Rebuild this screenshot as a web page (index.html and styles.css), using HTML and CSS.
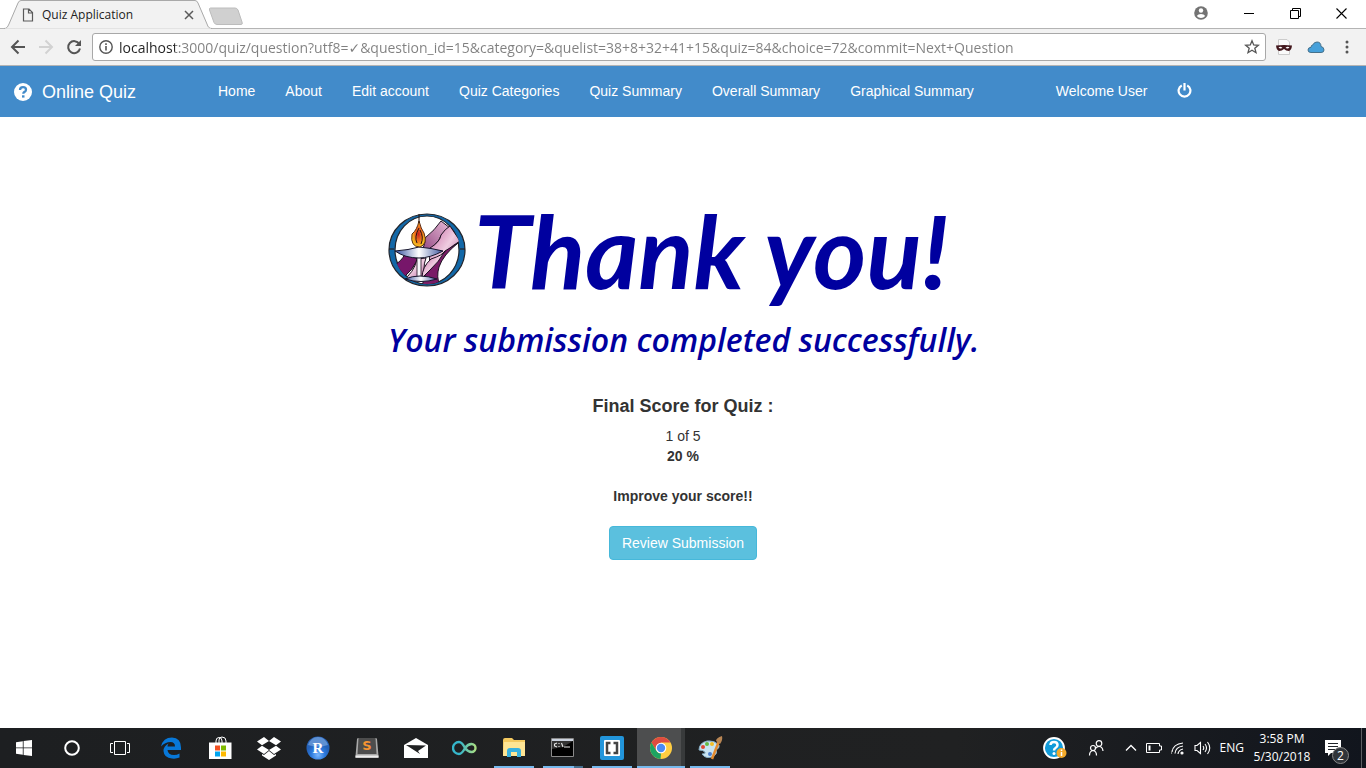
FILE: index.html
```html
<!DOCTYPE html>
<html lang="en">
<head>
<meta charset="utf-8">
<title>Quiz Application</title>
<link rel="stylesheet" href="styles.css">
</head>
<body>
<header class="browser">
  <div class="tabstrip">
    <div class="tab">
      <svg class="tab-shape" viewBox="0 0 208 29" preserveAspectRatio="none"><path d="M0 28.500C3 28.500 3.500 27 5 24L14 3Q15 .5 17 .5H191Q193 .5 194 3L203 24C204 27 205 28.500 208 28.500" fill="#f2f2f2" stroke="#a9a9a9"/><path d="M1 29H207" stroke="#f2f2f2"/></svg>
      <svg class="tab-icon" width="12" height="14" viewBox="0 0 12 14" fill="none" stroke="#5a5a5a" stroke-width="1.200"><path d="M1.500 1H7L10.500 4.500V13H1.500ZM6.500 1V5H10.500"/></svg>
      <span class="tab-title">Quiz Application</span>
      <button class="plain tab-close" aria-label="Close tab"><svg width="10" height="10" viewBox="0 0 10 10" stroke="#5a5a5a" stroke-width="1.500"><path d="M1 1L9 9M9 1L1 9"/></svg></button>
    </div>
    <button class="plain newtab" aria-label="New tab"><svg width="36" height="19" viewBox="0 0 36 19"><path d="M2.500 1H27Q29 1 30 3L34 15Q35 17.500 33 17.500H9Q7 17.500 6 15.500L1.500 3Q1 1 2.500 1Z" fill="#d0d0d0" stroke="#bcbcbc"/></svg></button>
    <div class="window-controls">
      <button class="plain account" aria-label="Account"><svg width="14" height="14" viewBox="0 0 14 14"><circle cx="7" cy="7" r="6.800" fill="#737373"/><circle cx="7" cy="4.500" r="2.200" fill="#fff"/><path d="M2.800 10Q4 8 7 8T11.200 10Q9.500 12 7 12T2.800 10Z" fill="#fff"/></svg></button>
      <button class="plain" aria-label="Minimize"><svg width="11" height="11" viewBox="0 0 11 11"><path d="M0 5.500H10" stroke="#000"/></svg></button>
      <button class="plain" aria-label="Restore"><svg width="11" height="11" viewBox="0 0 11 11" fill="none" stroke="#000"><path d="M.5 2.500H8.500V10.500H.5ZM2.500 2.500V.5H10.500V8.500H8.500"/></svg></button>
      <button class="plain" aria-label="Close"><svg width="11" height="11" viewBox="0 0 11 11" stroke="#000" stroke-width="1.100"><path d="M.5 .5L10.500 10.500M10.500 .5L.5 10.500"/></svg></button>
    </div>
  </div>
  <div class="toolbar">
    <button class="plain tool" aria-label="Back"><svg width="16" height="16" viewBox="0 0 16 16" fill="none" stroke="#555" stroke-width="2"><path d="M15 8H2.500M8.500 1.500L2 8L8.500 14.500"/></svg></button>
    <button class="plain tool" aria-label="Forward"><svg width="16" height="16" viewBox="0 0 16 16" fill="none" stroke="#d2d2d2" stroke-width="2"><path d="M1 8H13.500M7.500 1.500L14 8L7.500 14.500"/></svg></button>
    <button class="plain tool" aria-label="Reload"><svg width="16" height="16" viewBox="0 0 16 16"><path d="M13.300 5A6 6 0 1 0 14 9.500" fill="none" stroke="#555" stroke-width="2"/><path d="M15 1V7H9Z" fill="#555"/></svg></button>
    <div class="omnibox">
      <svg width="14" height="14" viewBox="0 0 14 14"><circle cx="7" cy="7" r="6.200" fill="none" stroke="#555" stroke-width="1.400"/><path d="M6.200 6H7.800V10.500H6.200ZM6.200 3.300H7.800V4.900H6.200Z" fill="#555"/></svg>
      <input class="url" type="text" aria-label="Address" value="localhost:3000/quiz/question?utf8=✓&amp;question_id=15&amp;category=&amp;quelist=38+8+32+41+15&amp;quiz=84&amp;choice=72&amp;commit=Next+Question">
      <button class="plain" aria-label="Bookmark"><svg width="16" height="16" viewBox="0 0 16 16"><path d="M8 1.800L9.700 6L14.300 6.300L10.800 9.200L12 13.700L8 11.200L4 13.700L5.200 9.200L1.700 6.300L6.300 6Z" fill="none" stroke="#555" stroke-width="1.300"/></svg></button>
    </div>
    <div class="extensions">
      <button class="plain" aria-label="Mask extension"><svg width="16" height="16" viewBox="0 0 16 16"><path d="M2.500 .5H11L13.500 3V15.500H2.500Z" fill="#fafafa" stroke="#ccc"/><path d="M0 6.500Q8 5.500 16 6.500Q15.500 11 13 12Q10 12 8 10Q6 12 3 12Q.5 11 0 6.500Z" fill="#42161c"/><path d="M2.500 8.500Q4.500 7 6.500 9Q4 10 2.500 8.500ZM9.500 9Q11.500 7 13.500 8.500Q12 10 9.500 9Z" fill="#fff"/></svg></button>
      <button class="plain" aria-label="Cloud extension"><svg width="18" height="14" viewBox="0 0 18 14"><path d="M4 12.500Q1 12.500 1 10Q1 7.500 4 7.300Q4 5 6 4.800Q7 2 10 2Q14 2 14 6.500Q17 7 17 10Q17 12.500 14 12.500Z" fill="#46a0da" stroke="#46718b"/></svg></button>
      <button class="plain" aria-label="Menu"><svg width="4" height="14" viewBox="0 0 4 14" fill="#555"><circle cx="2" cy="2" r="1.500"/><circle cx="2" cy="7" r="1.500"/><circle cx="2" cy="12" r="1.500"/></svg></button>
    </div>
  </div>
</header>

<nav class="navbar">
  <a class="brand" href="#"><svg width="18" height="18" viewBox="0 0 18 18"><circle cx="9" cy="9" r="9" fill="#fff"/><path d="M6 7Q6 4.200 9 4.200Q12 4.200 12 6.700Q12 8 10.500 8.900Q9.300 9.500 9.300 10.800" fill="none" stroke="#428bca" stroke-width="2.300"/><path d="M8 12.300H10.500V14.600H8Z" fill="#428bca"/></svg>Online Quiz</a>
  <ul class="nav-links">
    <li><a href="#">Home</a></li><li><a href="#">About</a></li><li><a href="#">Edit account</a></li><li><a href="#">Quiz Categories</a></li><li><a href="#">Quiz Summary</a></li><li><a href="#">Overall Summary</a></li><li><a href="#">Graphical Summary</a></li>
  </ul>
  <ul class="nav-links user-links">
    <li><a href="#">Welcome User</a></li>
    <li><a href="#" aria-label="Log out"><svg width="15" height="17" viewBox="0 0 15 17" fill="none" stroke="#fff" stroke-width="2.200"><path d="M4.800 2.400A5.900 5.900 0 1 0 10.200 2.400M7.500 0V7.500"/></svg></a></li>
  </ul>
</nav>

<main class="result">
  <section class="thanks">
    <div class="thanks-row">
      <svg class="chalice" viewBox="0 0 78 74">
        <defs>
          <linearGradient id="pink" x1="0" y1="1" x2="1" y2="0"><stop offset="0" stop-color="#7d2c6d"/><stop offset="1" stop-color="#e9bcd8"/></linearGradient>
          <linearGradient id="pink2" x1="0" y1="0" x2="1" y2="1"><stop offset="0" stop-color="#c563a0"/><stop offset=".5" stop-color="#efcce0"/><stop offset="1" stop-color="#a95290"/></linearGradient>
          <linearGradient id="bowl"><stop offset="0" stop-color="#3551a0"/><stop offset=".5" stop-color="#fff"/><stop offset="1" stop-color="#4058a0"/></linearGradient>
          <radialGradient id="flame"><stop offset="0" stop-color="#c8201e"/><stop offset=".5" stop-color="#ef6b1f"/><stop offset="1" stop-color="#f7c81e"/></radialGradient>
          <clipPath id="disc"><ellipse cx="39" cy="37" rx="33" ry="34"/></clipPath>
        </defs>
        <ellipse cx="39" cy="37" rx="38" ry="36" fill="#1268a8" stroke="#22252c" stroke-width="1.200"/>
        <ellipse cx="39" cy="37" rx="32" ry="34" fill="#fff" stroke="#22252c" stroke-width="1.200"/>
        <g clip-path="url(#disc)" stroke="#1c1020" stroke-width="1">
          <path d="M28 46Q38 34 37 25Q47 17 53 8L62 15Q53 20 51 27Q44 36 28 46Z" fill="url(#pink)"/>
          <path d="M42 35Q52 29 53 22Q57 16 62 13L72 28Q58 36 48 52L41 60Z" fill="url(#pink2)"/>
          <path d="M17 41L30 46Q24 58 16 64L6 52Q13 49 17 41Z" fill="#77166a"/>
          <path d="M29 46L38 45Q34 55 38 68H14Q26 60 29 46Z" fill="url(#pink2)"/>
          <path d="M70 30Q55 42 51 54Q48 64 52 73H34Q38 62 38 52Q52 45 57 38Z" fill="#791b66"/>
          <path d="M43 46Q55 42 57 38Q51 49 42 57L34 65Q34 54 43 46Z" fill="url(#pink2)"/>
        </g>
        <path d="M29 44H33V66H29Z" fill="#f8f5fb" stroke="#1c1020" stroke-width=".8"/>
        <path d="M7 38Q21 37 31 34Q43 35 55 38Q42 45 31 45Q17 45 7 38Z" fill="url(#bowl)" stroke="#15152c"/>
        <path d="M17 66Q31 60 49 66Q33 71 17 66Z" fill="url(#bowl)" stroke="#15152c"/>
        <path d="M31 8Q33 16 36 20Q40 31 32 34Q22 34 24 21Q29 17 31 8Z" fill="url(#flame)" stroke="#5e2b13"/>
        <path d="M31 1V10M29 30Q26 24 31 15M33 31Q36 24 32 17M1 36H6M72 36H77" fill="none" stroke="#26150e"/>
      </svg>
      <h1>Thank you!</h1>
    </div>
    <p class="thanks-note">Your submission completed successfully.</p>
  </section>
  <section class="score">
    <h2>Final Score for Quiz :</h2>
    <p>1 of 5</p>
    <p><strong>20 %</strong></p>
    <p class="improve"><strong>Improve your score!!</strong></p>
    <button class="review">Review Submission</button>
  </section>
</main>

<footer class="taskbar">
  <div class="system-buttons">
    <button class="plain task" aria-label="Start"><svg width="16" height="16" viewBox="0 0 16 16" fill="#fff"><path d="M0 2.200L6.800 1.200V7.500H0ZM7.600 1L16 0V7.500H7.600ZM0 8.300H6.800V14.800L0 13.800ZM7.600 8.300H16V16L7.600 15Z"/></svg></button>
    <button class="plain task" aria-label="Cortana"><svg width="16" height="16" viewBox="0 0 16 16"><circle cx="8" cy="8" r="6.800" fill="none" stroke="#fff" stroke-width="2"/></svg></button>
    <button class="plain task" aria-label="Task view"><svg width="20" height="14" viewBox="0 0 20 14" fill="none" stroke="#fff"><path d="M4.500 .5H15.500V13.500H4.500ZM3 2.500H.5V11.500H3M17 2.500H19.500V11.500H17"/></svg></button>
  </div>
  <div class="apps">
    <button class="plain task" aria-label="Edge"><svg width="20" height="22" viewBox="0 0 20 22"><path d="M0 9.500Q2 .5 11 .5Q20 1 20 10.500V13H6.500Q7 18 13 18Q16 18 18.500 16.500V20.500Q15 22 11 21.500Q3 21 2.500 14Q2.500 9 7.500 6.500Q6.500 8 6.500 9.500H14Q14 5 9.500 5Q4 5 0 9.500Z" fill="#0878d8"/></svg></button>
    <button class="plain task" aria-label="Store"><svg width="24" height="24" viewBox="0 0 24 24"><path d="M8 7V5Q8 1.500 11 1.500T14 5V7M11 7V4Q11 1 14 1Q18 1 18 5V7" fill="none" stroke="#fff" stroke-width="1"/><path d="M1 6.500H23.500V23H1Z" fill="#fff"/><path d="M7 9.500H12V14.500H7Z" fill="#f25022"/><path d="M13 9.500H18V14.500H13Z" fill="#7fba00"/><path d="M7 15.500H12V20.500H7Z" fill="#00a4ef"/><path d="M13 15.500H18V20.500H13Z" fill="#ffb900"/></svg></button>
    <button class="plain task" aria-label="Dropbox"><svg width="24" height="23" viewBox="0 0 24 23" fill="#fff"><path d="M7 0L12 4L5 8.300L0 4.500ZM17 0L24 4.500L19 8.300L12 4ZM5 8.800L12 13L7 17L0 12.500ZM19 8.800L24 12.500L17 17L12 13ZM12 14L17 18L19 17V18.500L12 23L5 18.500V17L7 18Z"/></svg></button>
    <button class="plain task" aria-label="RStudio"><svg width="24" height="24" viewBox="0 0 24 24"><defs><radialGradient id="rs" cx=".5" cy=".8"><stop offset="0" stop-color="#7bb8ff"/><stop offset=".6" stop-color="#2b79dc"/><stop offset="1" stop-color="#2461b8"/></radialGradient></defs><circle cx="12" cy="12" r="11.500" fill="url(#rs)"/><path d="M2 9Q5 1 12 1T22 9Q12 12 2 9Z" fill="#a8cdf5" opacity=".45"/><text x="12" y="17" text-anchor="middle" class="r-letter">R</text></svg></button>
    <button class="plain task" aria-label="Sublime Text"><svg width="24" height="22" viewBox="0 0 24 22"><path d="M2 2Q2 1 4 1H20Q22 1 22 2L23.500 19V21H.5V19Z" fill="#aaa"/><path d="M3.500 1H20.500L21.500 17H2.500Z" fill="#4d4d4d"/><path d="M.5 18.500H23.500V20.500H.5Z" fill="#eee"/><text x="12" y="13" text-anchor="middle" class="s-letter">S</text></svg></button>
    <button class="plain task" aria-label="Mail"><svg width="24" height="20" viewBox="0 0 24 20"><path d="M0 7L12 0L24 7V20H0Z" fill="#fff"/><path d="M2 7L22 7.500L14 13L16 16L2 7Z" fill="#202122"/></svg></button>
    <button class="plain task" aria-label="Infinity"><svg width="26" height="16" viewBox="0 0 26 16"><defs><linearGradient id="inf"><stop offset=".3" stop-color="#35b6cb"/><stop offset="1" stop-color="#a9de82"/></linearGradient></defs><path d="M13 8Q10 2 7 2A6 6 0 0 0 7 14Q10 14 13 8Q16 4 19.500 4A4 4 0 0 1 19.500 12Q16 12 13 8Z" fill="none" stroke="url(#inf)" stroke-width="2.400"/></svg></button>
    <button class="plain task open" aria-label="File Explorer"><svg width="22" height="20" viewBox="0 0 22 20"><path d="M0 2Q0 0 2 0H9L11 2H22V17H0Z" fill="#f5ca60"/><path d="M1 4H22V18H0Z" fill="#ffe594"/><path d="M4 19V13Q4 10 7 10H15Q18 10 18 13V19H14V14H8V19Z" fill="#39b1df"/></svg></button>
    <button class="plain task open stacked" aria-label="Command Prompt"><svg width="24" height="20" viewBox="0 0 24 20"><path d="M.5 .5H22.500V18.500H.5Z" fill="#000" stroke="#8a8a8a"/><path d="M1 1H22V3H1Z" fill="#ccd3df"/><path d="M1 3L22 3L12 9L1 11Z" fill="#333"/><path d="M6 5L3.500 6V8L6 9M8 5V6M8 8V9M10.500 5L12 9M13 9H19" fill="none" stroke="#e8e8e8" stroke-width="1.100"/></svg></button>
    <button class="plain task open" aria-label="Brackets"><svg width="24" height="24" viewBox="0 0 24 24"><rect width="24" height="24" rx="2" fill="#2295db"/><rect x="4" y="4" width="16" height="16" rx="1" fill="#fff"/><path d="M10.500 7H7V17H10.500M13.500 7H17V17H13.500" fill="none" stroke="#444" stroke-width="2.500"/></svg></button>
    <button class="plain task open stacked active" aria-label="Chrome"><svg width="22" height="22" viewBox="0 0 22 22"><circle cx="11" cy="11" r="11" fill="#ffcd42"/><path d="M11 11L6.300 13.700L1.500 5.500A11 11 0 0 1 20.500 5.500H11Z" fill="#df4c40"/><path d="M1.500 5.500L6.300 13.700Q8 16.500 11 16.500L10.500 22A11 11 0 0 1 1.500 5.500Z" fill="#1da362"/><circle cx="11" cy="11" r="5.300" fill="#fff"/><circle cx="11" cy="11" r="4.200" fill="#4b8bf4"/></svg></button>
    <button class="plain task open" aria-label="Paint"><svg width="25" height="24" viewBox="0 0 25 24"><path d="M1 14Q1 7 9 5Q16 4 21 9Q22 12 18 14Q20 17 16 20Q8 24 4 18Q8 18 7 16Q5 14 1 14Z" fill="#c8e4f2" stroke="#85acc3"/><circle cx="5" cy="11" r="2" fill="#df4634"/><circle cx="9" cy="8" r="2" fill="#64b944"/><circle cx="14" cy="8" r="2" fill="#f2bd27"/><circle cx="12" cy="18" r="2" fill="#4c7fcf"/><path d="M21 5L14 23" stroke="#e38a2f" stroke-width="2.500"/><path d="M18 5Q18 2 24 0Q25 4 22 8Z" fill="#b98654"/></svg></button>
  </div>
  <div class="tray">
    <button class="plain help" aria-label="Help"><svg width="24" height="22" viewBox="0 0 24 22"><circle cx="11" cy="11" r="10" fill="#129bd9" stroke="#fff" stroke-width="1.800"/><path d="M7.500 8Q7.500 5 11 5Q14.500 5 14.500 8Q14.500 10 12.500 11Q11 11.800 11 13.500" fill="none" stroke="#fff" stroke-width="2.500"/><circle cx="11" cy="16.500" r="1.500" fill="#fff"/><circle cx="18.500" cy="16" r="5" fill="#f4aa2b"/><path d="M18.500 12.500V14M18.500 15V19" stroke="#fff" stroke-width="1.500"/></svg></button>
    <button class="plain people" aria-label="People"><svg width="16" height="16" viewBox="0 0 16 16" fill="none" stroke="#fff" stroke-width="1.200"><circle cx="5" cy="8" r="2.500"/><circle cx="11" cy="3.500" r="2.800"/><path d="M1.500 15.500Q1.500 11 5 10.500Q8.500 11 8.500 15.500M7.500 8.500Q9 6.500 11 6.500Q14.500 6.500 15 11"/></svg></button>
    <button class="plain" aria-label="Show hidden icons"><svg width="12" height="8" viewBox="0 0 12 8"><path d="M1 6.500L6 1.500L11 6.500" fill="none" stroke="#fff" stroke-width="1.300"/></svg></button>
    <button class="plain" aria-label="Battery"><svg width="16" height="10" viewBox="0 0 16 10"><path d="M.5 .5H13.500V3H15.500V7H13.500V9.500H.5Z" fill="none" stroke="#fff"/><path d="M2.500 2.500H4.500V7.500H2.500Z" fill="#fff"/></svg></button>
    <button class="plain" aria-label="Network"><svg width="14" height="13" viewBox="0 0 14 13" fill="none" stroke="#fff" stroke-width="1.200"><path d="M1 10Q2 2 12 1M4 11.500Q4.500 5 12 4M7 12Q7.500 8 12 7" /><circle cx="11" cy="11" r="1" fill="#fff"/><path d="M.5 8.500V12" stroke="#888"/></svg></button>
    <button class="plain" aria-label="Volume"><svg width="17" height="14" viewBox="0 0 17 14" fill="none" stroke="#fff" stroke-width="1.100"><path d="M1 4.500H3L6.500 1.500V12.500L3 9.500H1ZM9 5Q10.500 7 9 9M11 3Q14 7 11 11M13.500 1Q18 7 13.500 13"/></svg></button>
    <button class="plain language">ENG</button>
    <button class="plain clock"><span>3:58 PM</span><span>5/30/2018</span></button>
    <button class="plain notices" aria-label="Notifications"><svg width="16" height="16" viewBox="0 0 16 16"><path d="M0 0H16V13H6L3 16V13H0Z" fill="#fff"/><path d="M3 3.500H13M3 6.500H13M3 9.500H10" stroke="#20242a"/></svg><span class="count">2</span></button>
  </div>
</footer>
</body>
</html>
```
FILE: styles.css
```css
* { box-sizing: border-box; }
body {
  margin: 0;
  min-height: 100vh;
  display: flex;
  flex-direction: column;
  background: #fff;
  color: #333;
  font: 14px/20px "Liberation Sans", Arial, sans-serif;
}
h1, h2, p, ul { margin: 0; padding: 0; }
a { color: inherit; text-decoration: none; }
svg { display: block; flex: none; }
.plain {
  display: flex;
  align-items: center;
  justify-content: center;
  margin: 0;
  padding: 0;
  border: 0;
  background: none;
  color: inherit;
  font: inherit;
}

/* Browser window */
.browser { font-family: "Noto Sans", sans-serif; }
.tabstrip { display: flex; height: 28px; padding-left: 4px; }
.tab {
  position: relative;
  z-index: 1;
  display: flex;
  align-items: center;
  width: 208px;
  height: 29px;
  padding: 0 18px;
}
.tab-shape { position: absolute; inset: 0; width: 100%; height: 100%; z-index: -1; }
.tab-title { flex: 1; padding-left: 8px; color: #222; font: 12px/16px "Open Sans", sans-serif; }
.newtab { padding-top: 4px; margin-left: -4px; }
.window-controls { display: flex; margin-left: auto; padding-right: 2px; }
.window-controls .plain { width: 46px; height: 26px; }
.window-controls .account { width: 50px; }
.toolbar {
  display: flex;
  align-items: center;
  height: 38px;
  padding-left: 4px;
  background: #f2f2f2;
  border: solid #b4b4b4;
  border-width: 1px 0;
}
.tool { width: 28px; height: 28px; }
.omnibox {
  display: flex;
  align-items: center;
  flex: 1;
  height: 28px;
  margin-left: 4px;
  padding: 0 5px 0 6px;
  background: #fff;
  border: 1px solid #a8a8a8;
  border-radius: 3px;
}
.url {
  flex: 1;
  min-width: 0;
  height: 24px;
  margin: 0;
  padding: 0 0 0 6px;
  border: 0;
  outline: 0;
  font: 14px/20px "Open Sans", "DejaVu Sans", sans-serif;
  color: transparent;
  background: linear-gradient(90deg, #222 62px, #808080 62px);
  -webkit-background-clip: text;
  background-clip: text;
}
.extensions { display: flex; gap: 15px; width: 100px; padding-left: 10px; }
.extensions .plain:last-child { margin-left: 5px; }

/* Site navigation */
.navbar { display: flex; min-height: 51px; background: #428bca; color: #fff; }
.brand { display: flex; align-items: center; gap: 10px; width: 203px; padding-left: 14px; font-size: 18px; }
.nav-links { display: flex; list-style: none; }
.nav-links a { display: flex; align-items: center; height: 50px; padding: 0 15px; }
.user-links { margin-left: 52px; }

/* Result page */
.result { flex: 1; display: flex; flex-direction: column; align-items: center; padding-top: 83px; }
.thanks { width: 600px; max-width: 100%; margin-left: 10px; color: #00009f; font-style: italic; }
.thanks-row { display: flex; align-items: center; gap: 8px; }
.chalice { width: 78px; height: 74px; }
.thanks h1 { font: italic 700 102px/100px Lato, sans-serif; white-space: nowrap; }
.thanks-note { padding-top: 20px; font: italic 600 32px/40px "Open Sans", sans-serif; white-space: nowrap; }
.score { display: flex; flex-direction: column; align-items: center; padding-top: 36px; }
.score h2 { margin-bottom: 10px; font-size: 18px; line-height: 20px; }
.improve { margin: 20px 0; }
.review {
  padding: 6px 12px;
  border: 1px solid #46b8da;
  border-radius: 4px;
  background: #5bc0de;
  color: #fff;
  font: inherit;
}

/* Desktop taskbar */
.taskbar {
  display: flex;
  height: 40px;
  background: linear-gradient(90deg, #1d1f21, #202122 70%, #11151d);
  color: #fff;
  font: 12px/18px "Open Sans", sans-serif;
}
.system-buttons { display: flex; }
.apps { display: flex; gap: 1px; margin-left: 3px; }
.task { position: relative; width: 48px; height: 40px; }
.open::after {
  content: "";
  position: absolute;
  left: 4px;
  right: 4px;
  bottom: 0;
  height: 2px;
  background: #76b9ed;
}
.stacked::after { background: linear-gradient(90deg, #76b9ed 31px, #456f8e 31px); }
.active { background: linear-gradient(90deg, #4d4e4f 44px, #383a3b 44px); }
.active::after { left: 0; right: 0; background: #76b9ed; }
.r-letter { fill: #fff; font: bold 15px "Liberation Serif", serif; }
.s-letter { fill: #f59432; font: bold 13px "DejaVu Sans", sans-serif; }
.tray {
  display: flex;
  align-items: center;
  gap: 9px;
  margin-left: auto;
  margin-right: 4px;
  padding-right: 20px;
  border-right: 1px solid #5c5f63;
}
.help { margin-right: 12px; }
.people { margin-right: 12px; }
.clock { flex-direction: column; width: 58px; }
.notices { position: relative; margin: 0 0 0 5px; }
.notices .count {
  position: absolute;
  left: 7px;
  top: 7px;
  width: 17px;
  height: 17px;
  border: 1px solid #888;
  border-radius: 50%;
  background: #30343a;
  font-size: 12px;
  line-height: 15px;
  text-align: center;
}
```
